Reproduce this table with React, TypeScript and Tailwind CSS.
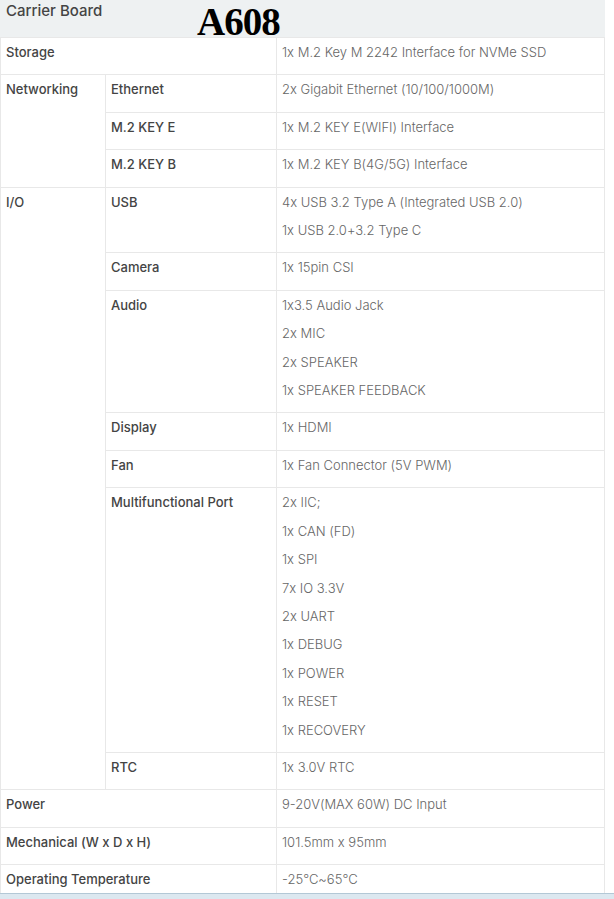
import React from "react";

type Row = {
  group?: string;
  groupSpan?: number;
  label?: string;
  values: string[];
};

const rows: Row[] = [
  { group: "Storage", values: ["1x M.2 Key M 2242 Interface for NVMe SSD"] },
  { group: "Networking", groupSpan: 3, label: "Ethernet", values: ["2x Gigabit Ethernet (10/100/1000M)"] },
  { label: "M.2 KEY E", values: ["1x M.2 KEY E(WIFI) Interface"] },
  { label: "M.2 KEY B", values: ["1x M.2 KEY B(4G/5G) Interface"] },
  {
    group: "I/O",
    groupSpan: 7,
    label: "USB",
    values: ["4x USB 3.2 Type A (Integrated USB 2.0)", "1x USB 2.0+3.2 Type C"],
  },
  { label: "Camera", values: ["1x 15pin CSI"] },
  {
    label: "Audio",
    values: ["1x3.5 Audio Jack", "2x MIC", "2x SPEAKER", "1x SPEAKER FEEDBACK"],
  },
  { label: "Display", values: ["1x HDMI"] },
  { label: "Fan", values: ["1x Fan Connector (5V PWM)"] },
  {
    label: "Multifunctional Port",
    values: [
      "2x IIC;",
      "1x CAN (FD)",
      "1x SPI",
      "7x IO 3.3V",
      "2x UART",
      "1x DEBUG",
      "1x POWER",
      "1x RESET",
      "1x RECOVERY",
    ],
  },
  { label: "RTC", values: ["1x 3.0V RTC"] },
  { group: "Power", values: ["9-20V(MAX 60W) DC Input"] },
  { group: "Mechanical (W x D x H)", values: ["101.5mm x 95mm"] },
  { group: "Operating Temperature", values: ["-25℃~65℃"] },
];

const cell = "border border-[#e8e8e8] px-[5px] pt-0 pb-[8px] align-top leading-[28.4px]";

export default function App() {
  return (
    <div className="flex h-[899px] flex-col overflow-hidden bg-white font-['Inter','Noto_Sans',sans-serif] text-[13px] [font-feature-settings:'calt'_0]">
      <div className="flex-1 overflow-hidden">
        <div className="relative h-[37px] w-[605px] bg-[#eef1f2] px-[6px] text-[15px] font-medium leading-[22px] text-[#444]">
          Carrier Board
          <span className="absolute left-[197px] top-[3px] font-['Liberation_Serif',serif] text-[39px] font-bold leading-[37px] tracking-[-1px] text-black">
            A608
          </span>
        </div>
        <table className="w-[605px] table-fixed border-collapse">
          <colgroup>
            <col className="w-[105px]" />
            <col className="w-[171px]" />
            <col />
          </colgroup>
          <tbody>
            {rows.map((r, i) => (
              <tr key={i}>
                {r.group && !r.label && (
                  <td colSpan={2} className={`${cell} font-medium text-[#444]`}>
                    {r.group}
                  </td>
                )}
                {r.group && r.label && (
                  <td rowSpan={r.groupSpan} className={`${cell} font-medium text-[#444]`}>
                    {r.group}
                  </td>
                )}
                {r.label && <td className={`${cell} font-medium text-[#444]`}>{r.label}</td>}
                <td className={`${cell} font-light text-[#666]`}>
                  {r.values.map((v) => (
                    <div key={v}>{v}</div>
                  ))}
                </td>
              </tr>
            ))}
          </tbody>
        </table>
      </div>
      <div className="h-[6px] border-t border-[#b3c8d6] bg-[#dce8f0]" />
    </div>
  );
}
